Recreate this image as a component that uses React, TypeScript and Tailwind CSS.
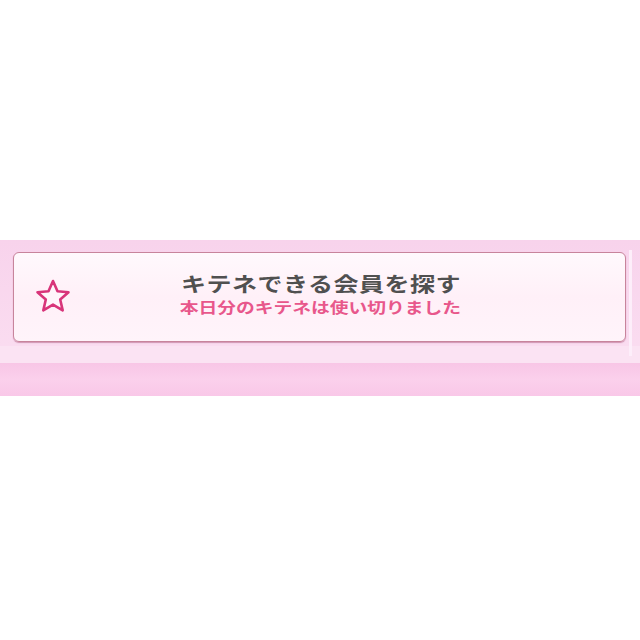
export default function App() {
  return (
    <div className="w-[640px] h-[640px] bg-white flex flex-col" style={{ fontFamily: '"Noto Sans CJK JP", "Noto Sans", sans-serif' }}>
      <div className="h-[240px]" />
      <div className="relative h-[156px] flex flex-col bg-gradient-to-b from-[#f8d3ec] to-[#fbe0f2]">
        <div className="px-[13px] pt-[12px]">
          <div className="relative h-[90px] rounded-[6px] border border-[#c8849c] bg-gradient-to-b from-[#fff9fd] via-[#fff0f8] to-[#fff4fa] shadow-[0_1px_1px_rgba(170,80,120,0.5)] w-[613px] flex items-center">
            <svg className="absolute left-[20px] top-[25px]" width="38" height="36" viewBox="0 0 38 36">
              <path
                d="M19 3 L23.5 13.2 L34.5 14.2 L26.2 21.5 L28.7 32.4 L19 26.6 L9.3 32.4 L11.8 21.5 L3.5 14.2 L14.5 13.2 Z"
                fill="#fff6fb"
                stroke="#d8357a"
                strokeWidth="2.6"
                strokeLinejoin="round"
              />
            </svg>
            <div className="flex-1 flex flex-col items-center pb-[5px] pl-[2px]">
              <span className="inline-block scale-x-125 text-[20px] leading-[24px] font-bold text-[#505050] tracking-[0.4px]">キテネできる会員を探す</span>
              <span className="inline-block scale-x-125 mt-[1px] text-[15px] leading-[20px] font-bold text-[#e8578b]">本日分のキテネは使い切りました</span>
            </div>
          </div>
        </div>
        <div className="h-[17px] mt-[4px] bg-[#fbe3f3]" />
        <div className="flex-1 bg-gradient-to-b from-[#f8c6e6] via-[#fbd0ec] to-[#f9c8e8]" />
        <div className="absolute right-[8px] top-[10px] bottom-[40px] w-[3px] bg-[#fdeefa]" />
      </div>
      <div className="flex-1 bg-white" />
    </div>
  );
}
